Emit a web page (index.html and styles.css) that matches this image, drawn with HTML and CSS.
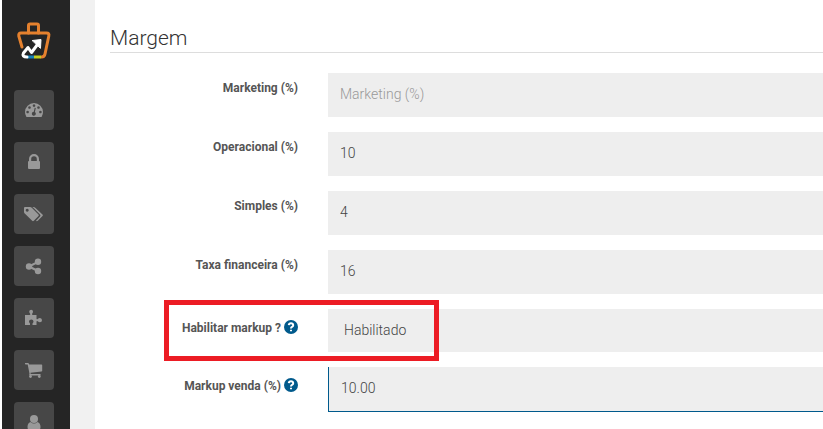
FILE: index.html
```html
<!DOCTYPE html>
<html lang="pt-BR">
<head>
    <meta charset="UTF-8">
    <meta name="viewport" content="width=device-width, initial-scale=1.0">
    <title>Margem</title>
    <link rel="stylesheet" href="styles.css">
</head>
<body>
    <nav class="sidebar">
        <a href="#" class="logo" aria-label="Início">
            <svg width="34" height="38" viewBox="0 0 34 38" fill="none" stroke-linecap="round" stroke-linejoin="round">
                <path d="M11.500 11V3.500Q11.500 2 13 2H20Q21.500 2 21.500 3.500V11" stroke="#e5812e" stroke-width="3"/>
                <path d="M5 25L1.800 14Q1.400 11 4 11H29.500Q32.500 11 31.800 14L28 32Q27.500 35 24.500 35" stroke="#e5812e" stroke-width="3"/>
                <path d="M10 35H17" stroke="#1481b8" stroke-width="3" stroke-linecap="butt"/>
                <path d="M17 35H24" stroke="#c3cf22" stroke-width="3" stroke-linecap="butt"/>
                <path d="M10 35Q4.500 35 6.500 31L11 25.500L14.500 30.500L22 20.500" stroke="#fff" stroke-width="3"/>
                <path d="M15.500 18.500L24 17.500L23.500 26Z" fill="#fff" stroke="#fff" stroke-width="1"/>
            </svg>
        </a>
        <a href="#" class="menu-item" aria-label="Painel">
            <svg class="icon" viewBox="0 0 18 18">
                <path fill-rule="evenodd" d="M0 11A9 9 0 0 1 18 11Q18 13.600 16.700 15.700Q16.500 16 16 16H2Q1.500 16 1.300 15.700Q0 13.600 0 11ZM2.600 9.700a1.300 1.300 0 1 0 .010 0ZM4.500 5.200a1.300 1.300 0 1 0 .010 0ZM9 3.300a1.300 1.300 0 1 0 .010 0ZM13.500 5.200a1.300 1.300 0 1 0 .010 0ZM15.400 9.700a1.300 1.300 0 1 0 .010 0ZM9.700 6.800L8.800 10.700A2 2 0 1 0 9.900 11L10.800 7.100Z"/>
            </svg>
        </a>
        <a href="#" class="menu-item" aria-label="Segurança">
            <svg class="icon" viewBox="0 0 18 18">
                <path fill-rule="evenodd" d="M4 8V6A5 5 0 0 1 14 6V8Q15 8 15 9V15Q15 16 14 16H4Q3 16 3 15V9Q3 8 4 8ZM6.200 8H11.800V6A2.800 2.800 0 0 0 6.200 6Z"/>
            </svg>
        </a>
        <a href="#" class="menu-item" aria-label="Etiquetas">
            <svg class="icon icon-wide" viewBox="0 0 20 18">
                <path fill-rule="evenodd" d="M0 3Q0 2 1 2H6Q7 2 8 3L14.500 9.500Q15.200 10.200 14.500 11L9.800 15.800Q9 16.500 8.200 15.800L1 8.800Q0 8 0 7ZM3.200 3.700a1.500 1.500 0 1 0 .010 0Z"/>
                <path d="M8.300 2H9.500Q10.500 2 11.500 3L18.500 9.500Q19.400 10.300 18.500 11L13.800 15.800Q12.800 16.600 12 15.800L16 11.500Q17 10.400 16 9.500L9.800 3.200Q9 2.400 8.300 2Z"/>
            </svg>
        </a>
        <a href="#" class="menu-item" aria-label="Compartilhar">
            <svg class="icon" viewBox="0 0 18 18">
                <path d="M4 9.500L13 4.800M4 9.500L13 14" stroke="#999" stroke-width="2"/>
                <circle cx="4" cy="9.500" r="3.200"/>
                <circle cx="13" cy="4.800" r="3.200"/>
                <circle cx="13" cy="14" r="3.200"/>
            </svg>
        </a>
        <a href="#" class="menu-item" aria-label="Integrações">
            <svg class="icon" viewBox="0 0 18 18">
                <path d="M0 6H4.500Q5.500 6 5.300 5Q4.200 4 4.200 2.600Q4.300.700 6.200.700Q8 .700 8 2.600Q8 4 7 5Q6.800 6 8 6H11.500V9.500Q11.500 10.700 12.700 10Q13.700 9 15 9Q17 9.200 17 11.200Q17 13.200 15 13.300Q13.700 13.200 12.700 12.200Q11.500 11.700 11.500 13V16H7.500V14.500Q8.500 13.500 8.500 12.200Q8.300 10.500 6.300 10.500Q4.200 10.500 4 12.200Q4 13.500 5 14.500V16H0Z"/>
            </svg>
        </a>
        <a href="#" class="menu-item" aria-label="Vendas">
            <svg class="icon" viewBox="0 0 18 18">
                <path d="M0 2H3Q4 2 4.200 3.500H16.500Q17.200 3.500 17.200 4.300V9.700Q17.200 10.400 16.500 10.500L5.500 11.800L5.700 13H15Q15.700 13 15.700 13.700T15 14.400H4.800Q4.200 14.400 4.200 13.600L4.500 12.700L2.700 3.400H.700Q0 3.400 0 2.700Z"/>
                <circle cx="5.500" cy="15.500" r="1.400"/>
                <circle cx="14.300" cy="15.500" r="1.400"/>
            </svg>
        </a>
        <a href="#" class="menu-item" aria-label="Clientes">
            <svg class="icon" viewBox="0 0 18 18">
                <circle cx="9" cy="6" r="4"/>
                <path d="M5.500 9Q9 12 12.500 9Q15.500 10 15.500 14Q15.500 17 13 17H5Q2.500 17 2.500 14Q2.500 10 5.500 9Z"/>
            </svg>
        </a>
    </nav>

    <main class="content">
        <h1>Margem</h1>
        <form class="form">
            <div class="form-group">
                <label for="marketing">Marketing (%)</label>
                <input type="text" id="marketing" class="form-control" placeholder="Marketing (%)">
            </div>
            <div class="form-group">
                <label for="operacional">Operacional (%)</label>
                <input type="text" id="operacional" class="form-control" value="10">
            </div>
            <div class="form-group">
                <label for="simples">Simples (%)</label>
                <input type="text" id="simples" class="form-control" value="4">
            </div>
            <div class="form-group">
                <label for="taxa">Taxa financeira (%)</label>
                <input type="text" id="taxa" class="form-control" value="16">
            </div>
            <div class="form-group highlighted">
                <label for="habilitar" class="with-help">Habilitar markup ?
                    <svg class="help" viewBox="0 0 14 14"><circle cx="7" cy="7" r="7"/><path d="M4.800 5.200Q5 3.300 7 3.300T9.200 5.200Q9.200 6.300 8 6.900Q7 7.400 7 8.400M7 9.700V11.300"/></svg>
                </label>
                <select id="habilitar" class="form-control">
                    <option selected>Habilitado</option>
                    <option>Desabilitado</option>
                </select>
            </div>
            <div class="form-group">
                <label for="markup" class="with-help">Markup venda (%)
                    <svg class="help" viewBox="0 0 14 14"><circle cx="7" cy="7" r="7"/><path d="M4.800 5.200Q5 3.300 7 3.300T9.200 5.200Q9.200 6.300 8 6.900Q7 7.400 7 8.400M7 9.700V11.300"/></svg>
                </label>
                <input type="text" id="markup" class="form-control active" value="10.00">
            </div>
        </form>
    </main>
</body>
</html>
```
FILE: styles.css
```css
* {
    box-sizing: border-box;
}

body {
    display: flex;
    height: 100vh;
    margin: 0;
    padding-left: 2px;
    overflow: hidden;
    background: #fff;
    color: #333;
    font-family: Roboto, "Liberation Sans", sans-serif;
    font-size: 14px;
}

/* Sidebar */
.sidebar {
    display: flex;
    flex-direction: column;
    flex-shrink: 0;
    align-items: center;
    gap: 12px;
    width: 68px;
    padding: 22px 4px 0 0;
    overflow: hidden;
    background: #252525;
}

.logo {
    flex-shrink: 0;
    height: 56px;
}

.logo svg {
    display: block;
}

.menu-item {
    display: flex;
    flex-shrink: 0;
    align-items: center;
    justify-content: center;
    width: 40px;
    height: 40px;
    border-radius: 4px;
    background: #474747;
}

.icon {
    width: 18px;
    height: 18px;
    fill: #999;
}

.icon-wide {
    width: 20px;
}

/* Content */
.content {
    flex: 1;
    min-width: 0;
    padding: 24px 0 0 15px;
    border-left: 25px solid #f1f1f1;
}

h1 {
    margin: 0 0 20px;
    border-bottom: 1px solid #ddd;
    font-size: 21px;
    font-weight: 300;
    line-height: 28px;
}

.form {
    display: flex;
    flex-direction: column;
    gap: 15px;
}

.form-group {
    display: grid;
    grid-template-columns: 188px 1fr;
    column-gap: 30px;
    position: relative;
}

label {
    padding-top: 6px;
    color: #555;
    font-size: 12px;
    font-weight: 700;
    line-height: 18px;
    text-align: right;
}

.with-help {
    padding-top: 10px;
}

.form-control {
    width: 100%;
    height: 44px;
    padding: 0 12px 2px;
    border: 0;
    border-radius: 0;
    outline: none;
    background: #eee;
    color: #444;
    font-family: inherit;
    font-size: 14px;
    font-weight: 300;
}

.form-control::placeholder {
    color: #999;
}

select.form-control {
    height: 43px;
    padding: 0 16px 2px;
    appearance: none;
}

.form-control.active {
    height: 45px;
    border-bottom: 1px solid #005a8c;
    border-left: 1px solid #005a8c;
}

.help {
    width: 14px;
    height: 14px;
    vertical-align: -2px;
    fill: #005a8c;
}

.help path {
    fill: none;
    stroke: #fff;
    stroke-width: 2;
}

/* Red frame over the markup option */
.highlighted::after {
    content: "";
    position: absolute;
    top: -9px;
    left: 54px;
    z-index: 1;
    box-sizing: border-box;
    width: 275px;
    height: 61px;
    border: 5px solid #ec1c24;
    pointer-events: none;
}
```
